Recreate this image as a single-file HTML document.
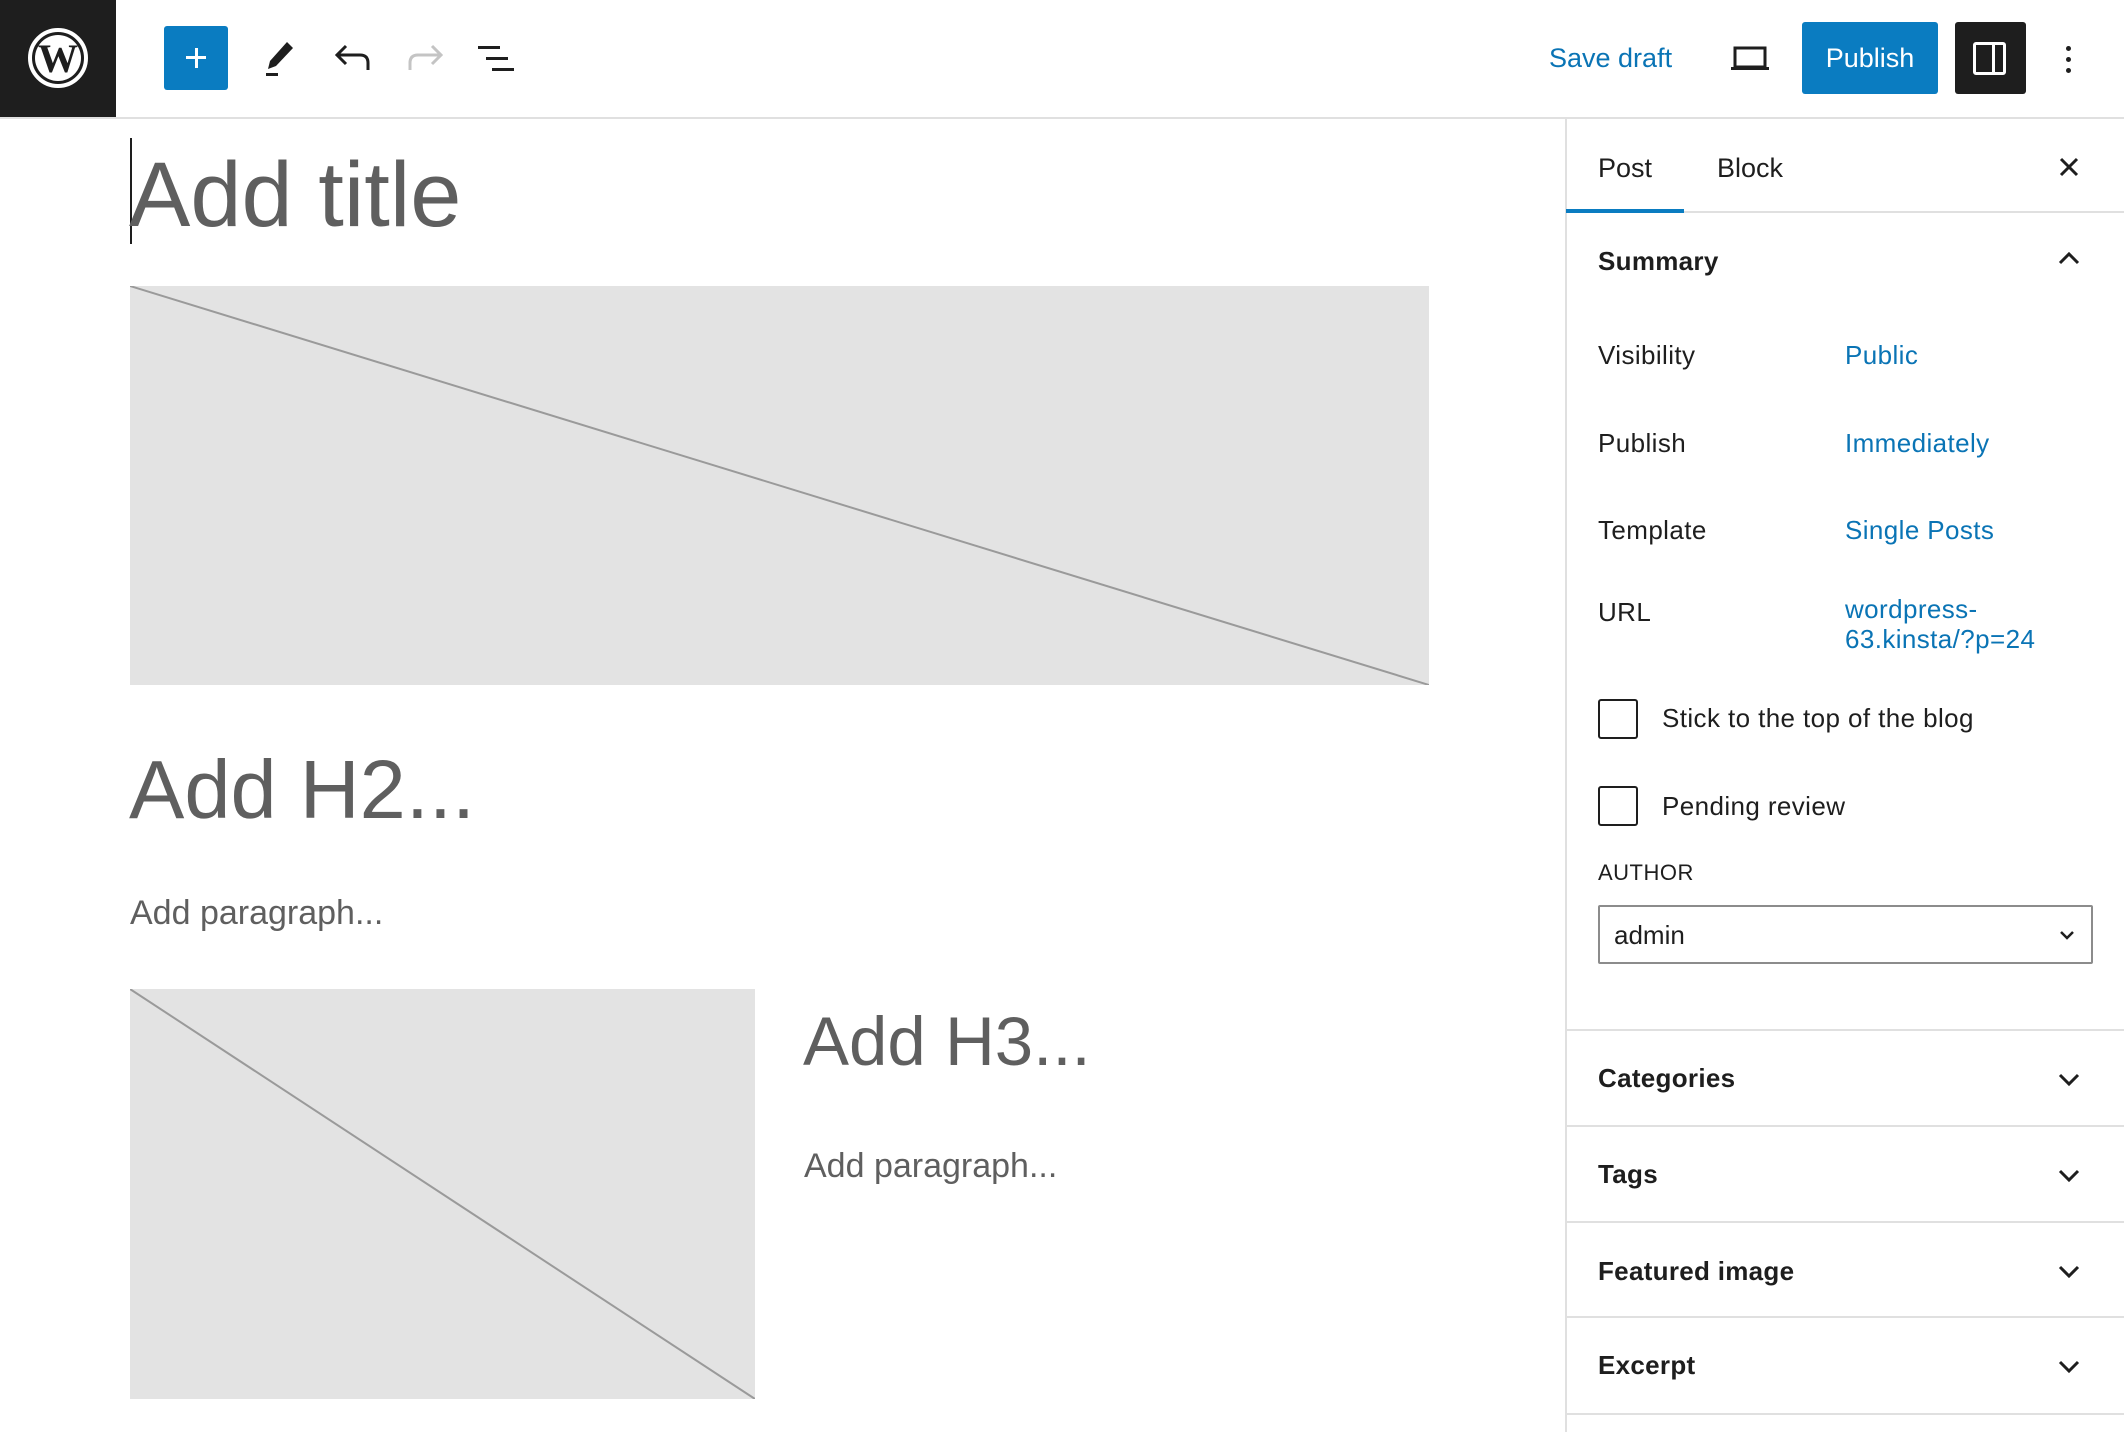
<!DOCTYPE html>
<html><head><meta charset="utf-8"><style>
*{margin:0;padding:0;box-sizing:border-box}
body{width:2124px;height:1432px;overflow:hidden;background:#fff;font-family:"Liberation Sans",sans-serif;color:#1e1e1e;position:relative}
.a{position:absolute;white-space:nowrap}
.t{line-height:40px;font-size:26px;letter-spacing:0.4px}
.link{color:#0a74b5}
.hr{position:absolute;left:1566px;width:558px;height:2px;background:#e0e0e0}
.gray{color:#5f5f5f}
.h{font-size:26px;line-height:36px;font-weight:bold;letter-spacing:0.3px}
</style></head><body>
<div class="a" style="left:0;top:0;width:116px;height:118px;background:#1e1e1e"></div>
<svg class="a" style="left:26px;top:26px" width="64" height="64" viewBox="0 0 64 64">
<circle cx="32" cy="32" r="28" fill="none" stroke="#fff" stroke-width="4"/>
<circle cx="32" cy="32" r="23" fill="#fff"/>
<text x="32" y="46" font-family="Liberation Serif" font-weight="bold" font-size="40" text-anchor="middle" fill="#1e1e1e">W</text>
</svg>
<div class="a" style="left:0;top:117px;width:2124px;height:2px;background:#e0e0e0"></div>
<div class="a" style="left:164px;top:26px;width:64px;height:64px;background:#0a7cc1;border-radius:3px"></div>
<div class="a" style="left:186px;top:56px;width:20px;height:3px;background:#fff"></div>
<div class="a" style="left:194.5px;top:48px;width:3px;height:20px;background:#fff"></div>
<svg class="a" style="left:262px;top:40px" width="34" height="38" viewBox="0 0 34 38">
<path d="M25 2 L31 8 L14 26 L6 29 L8 21 Z" fill="#1e1e1e"/><rect x="4" y="33" width="12" height="3" fill="#1e1e1e"/></svg>
<svg class="a" style="left:334px;top:42px" width="38" height="32" viewBox="0 0 38 32">
<path d="M12 4 L3 13 L12 22 M3 13 H26 Q34 13 34 21 V28" fill="none" stroke="#1e1e1e" stroke-width="3"/></svg>
<svg class="a" style="left:406px;top:42px" width="38" height="32" viewBox="0 0 38 32">
<path d="M26 4 L35 13 L26 22 M35 13 H12 Q4 13 4 21 V28" fill="none" stroke="#c4c4c4" stroke-width="3"/></svg>
<div class="a" style="left:478px;top:46px;width:22px;height:3px;background:#1e1e1e"></div>
<div class="a" style="left:486px;top:57px;width:22px;height:3px;background:#1e1e1e"></div>
<div class="a" style="left:492px;top:68px;width:22px;height:3px;background:#1e1e1e"></div>
<div class="a link" style="left:1549px;top:40px;font-size:27px;line-height:36px">Save draft</div>
<svg class="a" style="left:1729px;top:44px" width="42" height="30" viewBox="0 0 42 30">
<rect x="6" y="4" width="30" height="19" fill="none" stroke="#1e1e1e" stroke-width="3"/><rect x="2" y="23" width="38" height="3" fill="#1e1e1e"/></svg>
<div class="a" style="left:1802px;top:22px;width:136px;height:72px;background:#0a7cc1;border-radius:3px;color:#fff;font-size:27px;line-height:72px;text-align:center">Publish</div>
<div class="a" style="left:1955px;top:22px;width:71px;height:72px;background:#1e1e1e;border-radius:3px"></div>
<div class="a" style="left:1973px;top:42px;width:33px;height:33px;border:3px solid #fff;border-radius:3px"></div>
<div class="a" style="left:1992px;top:42px;width:3px;height:33px;background:#fff"></div>
<div class="a" style="left:2066px;top:46px;width:5px;height:5px;background:#1e1e1e;border-radius:50%"></div>
<div class="a" style="left:2066px;top:57px;width:5px;height:5px;background:#1e1e1e;border-radius:50%"></div>
<div class="a" style="left:2066px;top:68px;width:5px;height:5px;background:#1e1e1e;border-radius:50%"></div>

<div class="a" style="left:130px;top:138px;width:2px;height:106px;background:#1e1e1e"></div>
<div class="a gray" style="left:129px;top:145px;font-size:92px;line-height:100px">Add title</div>
<svg class="a" style="left:130px;top:286px" width="1299" height="399"><rect width="1299" height="399" fill="#e3e3e3"/><line x1="0" y1="0" x2="1299" y2="399" stroke="#9a9a9a" stroke-width="2"/></svg>
<div class="a gray" style="left:129px;top:745px;font-size:83px;line-height:90px">Add H2...</div>
<div class="a gray" style="left:130px;top:893px;font-size:34px;line-height:40px">Add paragraph...</div>
<svg class="a" style="left:130px;top:989px" width="625" height="410"><rect width="625" height="410" fill="#e3e3e3"/><line x1="0" y1="0" x2="625" y2="410" stroke="#9a9a9a" stroke-width="2"/></svg>
<div class="a gray" style="left:803px;top:1002px;font-size:69px;line-height:80px">Add H3...</div>
<div class="a gray" style="left:804px;top:1146px;font-size:34px;line-height:40px">Add paragraph...</div>

<div class="a" style="left:1565px;top:118px;width:2px;height:1314px;background:#e0e0e0"></div>
<div class="a" style="left:1598px;top:150px;font-size:27px;line-height:36px">Post</div>
<div class="a" style="left:1717px;top:150px;font-size:27px;line-height:36px">Block</div>
<svg class="a" style="left:2057px;top:155px" width="24" height="24"><path d="M4 4L20 20M20 4L4 20" stroke="#1e1e1e" stroke-width="3"/></svg>
<div class="hr" style="top:211px"></div>
<div class="a" style="left:1566px;top:209px;width:118px;height:4px;background:#0a7cc1"></div>
<div class="a h" style="left:1598px;top:243px">Summary</div>
<svg class="a" style="left:2057px;top:250px" width="24" height="16"><path d="M3 13L12 4L21 13" fill="none" stroke="#1e1e1e" stroke-width="3"/></svg>
<div class="a t" style="left:1598px;top:335px">Visibility</div><div class="a t link" style="left:1845px;top:335px">Public</div>
<div class="a t" style="left:1598px;top:423px">Publish</div><div class="a t link" style="left:1845px;top:423px">Immediately</div>
<div class="a t" style="left:1598px;top:510px">Template</div><div class="a t link" style="left:1845px;top:510px">Single Posts</div>
<div class="a t" style="left:1598px;top:592px">URL</div>
<div class="a link" style="left:1845px;top:594px;font-size:26px;line-height:30px;letter-spacing:0.4px">wordpress-<br>63.kinsta/?p=24</div>
<div class="a" style="left:1598px;top:699px;width:40px;height:40px;border:2px solid #1e1e1e;border-radius:3px"></div>
<div class="a t" style="left:1662px;top:698px">Stick to the top of the blog</div>
<div class="a" style="left:1598px;top:786px;width:40px;height:40px;border:2px solid #1e1e1e;border-radius:3px"></div>
<div class="a t" style="left:1662px;top:786px">Pending review</div>
<div class="a" style="left:1598px;top:860px;font-size:22px;line-height:26px;letter-spacing:0.5px">AUTHOR</div>
<div class="a" style="left:1598px;top:905px;width:495px;height:59px;border:2px solid #8c8c8c;border-radius:2px"></div>
<div class="a" style="left:1614px;top:915px;font-size:26px;line-height:40px">admin</div>
<svg class="a" style="left:2058px;top:928px" width="18" height="14"><path d="M3 4L9 10L15 4" fill="none" stroke="#1e1e1e" stroke-width="2.5"/></svg>
<div class="hr" style="top:1029px"></div>
<div class="a h" style="left:1598px;top:1060px">Categories</div>
<div class="hr" style="top:1125px"></div>
<div class="a h" style="left:1598px;top:1156px">Tags</div>
<div class="hr" style="top:1221px"></div>
<div class="a h" style="left:1598px;top:1253px">Featured image</div>
<div class="hr" style="top:1316px"></div>
<div class="a h" style="left:1598px;top:1347px">Excerpt</div>
<div class="hr" style="top:1413px"></div>
<svg class="a" style="left:2057px;top:1072px" width="24" height="16"><path d="M3 3L12 12L21 3" fill="none" stroke="#1e1e1e" stroke-width="3"/></svg>
<svg class="a" style="left:2057px;top:1168px" width="24" height="16"><path d="M3 3L12 12L21 3" fill="none" stroke="#1e1e1e" stroke-width="3"/></svg>
<svg class="a" style="left:2057px;top:1264px" width="24" height="16"><path d="M3 3L12 12L21 3" fill="none" stroke="#1e1e1e" stroke-width="3"/></svg>
<svg class="a" style="left:2057px;top:1359px" width="24" height="16"><path d="M3 3L12 12L21 3" fill="none" stroke="#1e1e1e" stroke-width="3"/></svg>
</body></html>
